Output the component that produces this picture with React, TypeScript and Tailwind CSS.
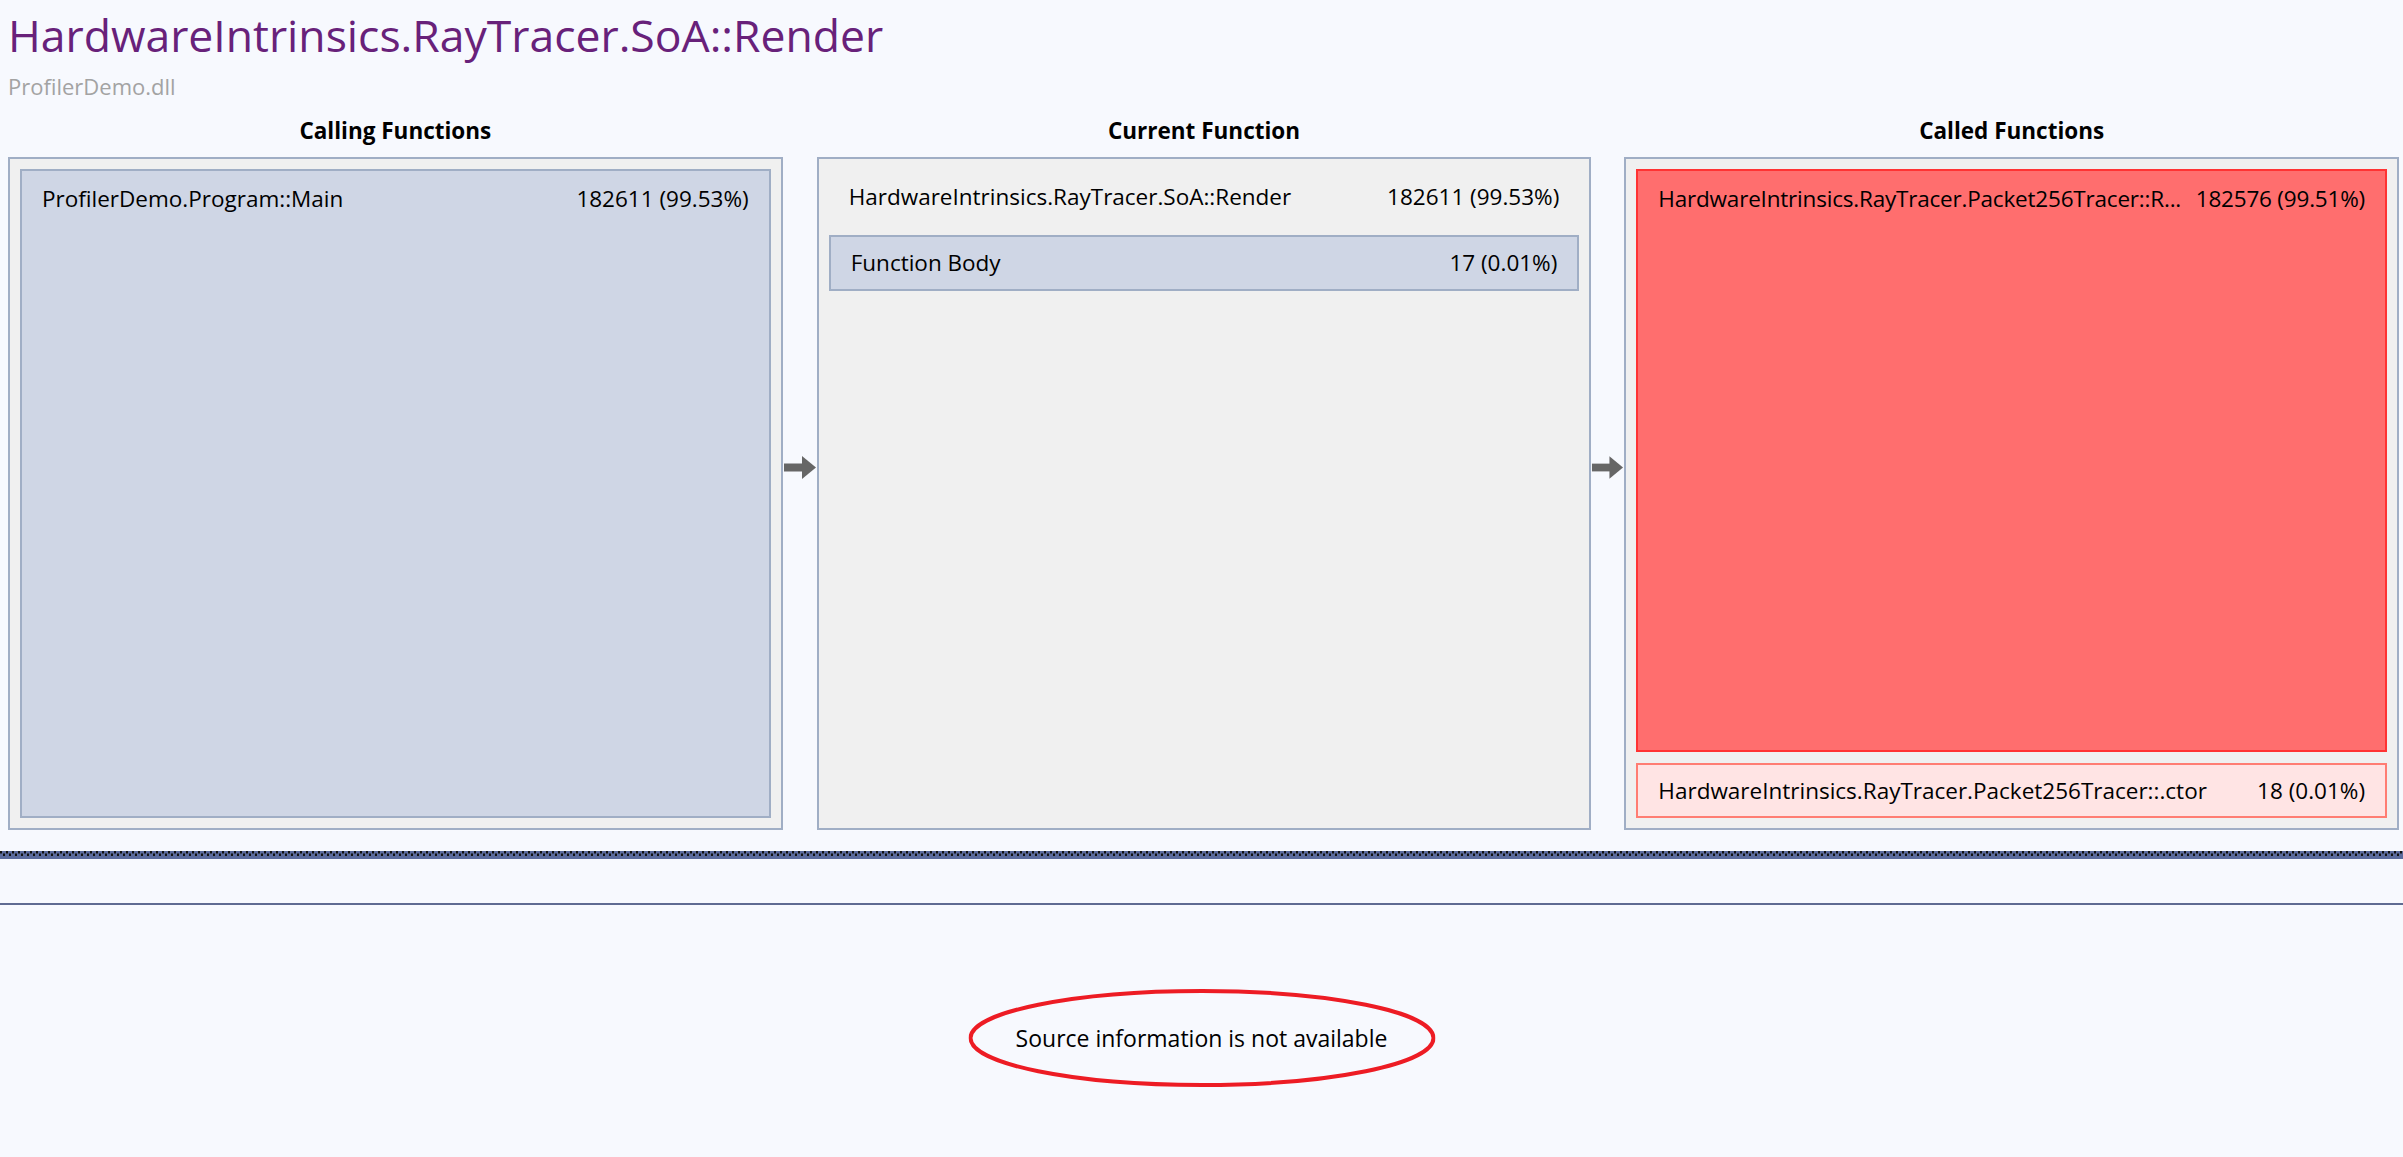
import React from 'react';

interface Row {
  name: string;
  value: string;
}

const FONT = "font-['Open_Sans','Noto_Sans',sans-serif]";

const ArrowRight: React.FC = () => (
  <svg width="34" height="24" viewBox="0 0 34 24" className="block">
    <rect x="1" y="7.5" width="19" height="8" fill="#666666" />
    <polygon points="19,0 33,11.5 19,23" fill="#666666" />
  </svg>
);

const RowLine: React.FC<{ row: Row; className?: string }> = ({ row, className = '' }) => (
  <div className={`flex items-center justify-between gap-[4px] px-[20px] text-[22.5px] text-black whitespace-nowrap ${className}`}>
    <span className="min-w-0">{row.name}</span>
    <span className="shrink-0">{row.value}</span>
  </div>
);

const Column: React.FC<{ title: string; children: React.ReactNode }> = ({ title, children }) => (
  <div className="flex-1 flex flex-col min-w-0">
    <div className="h-[52px] flex items-center justify-center text-[22.5px] font-bold text-black">{title}</div>
    <div className="flex-1 flex flex-col border-2 border-[#a0aec5] bg-[#f0f0f0] p-[10px]">{children}</div>
  </div>
);

const Splitter: React.FC = () => (
  <svg width="100%" height="8" className="block">
    <defs>
      <pattern id="dots" width="6" height="8" patternUnits="userSpaceOnUse">
        <rect x="0" y="0" width="6" height="8" fill="#5a6a9c" />
        <rect x="0" y="0" width="2" height="2.5" fill="#111111" />
        <rect x="3" y="2.5" width="2" height="2.5" fill="#111111" />
      </pattern>
    </defs>
    <rect x="0" y="0" width="100%" height="8" fill="url(#dots)" />
  </svg>
);

export default function App() {
  return (
    <div className={`w-full h-[1157px] overflow-hidden bg-[#f7f9fe] flex flex-col ${FONT}`}>
      <div className="pl-[8px]">
        <div className="pt-[7px] leading-[56px] text-[44.5px] text-[#68217a] whitespace-nowrap">
          HardwareIntrinsics.RayTracer.SoA::Render
        </div>
        <div className="mt-[10px] leading-[26px] text-[22px] text-[#a3a3a3]">ProfilerDemo.dll</div>
      </div>

      <div className="mt-[6px] h-[725px] flex pl-[8px] pr-[4px]">
        <Column title="Calling Functions">
          <div className="flex-1 border-2 border-[#a0aec5] bg-[#cfd6e5]">
            <RowLine className="h-[56px]" row={{ name: 'ProfilerDemo.Program::Main', value: '182611 (99.53%)' }} />
          </div>
        </Column>

        <div className="w-[34px] flex items-center justify-center">
          <ArrowRight />
        </div>

        <Column title="Current Function">
          <RowLine className="h-[56px]" row={{ name: 'HardwareIntrinsics.RayTracer.SoA::Render', value: '182611 (99.53%)' }} />
          <div className="mt-[10px] h-[56px] border-2 border-[#a0aec5] bg-[#cfd6e5] flex flex-col justify-center">
            <RowLine row={{ name: 'Function Body', value: '17 (0.01%)' }} />
          </div>
        </Column>

        <div className="w-[33px] flex items-center justify-center">
          <ArrowRight />
        </div>

        <Column title="Called Functions">
          <div className="flex-1 border-2 border-[#ff3333] bg-[#ff6e6e]">
            <RowLine
              className="h-[56px] tracking-[-0.2px]"
              row={{ name: 'HardwareIntrinsics.RayTracer.Packet256Tracer::R...', value: '182576 (99.51%)' }}
            />
          </div>
          <div className="mt-[11px] h-[55px] border-2 border-[#ff7d73] bg-[#ffe4e4] flex flex-col justify-center">
            <RowLine row={{ name: 'HardwareIntrinsics.RayTracer.Packet256Tracer::.ctor', value: '18 (0.01%)' }} />
          </div>
        </Column>
      </div>

      <div className="mt-[21px]">
        <Splitter />
      </div>
      <div className="mt-[44px] h-[2px] bg-[#5f6b92]" />

      <div className="flex-1 flex items-center justify-center pt-[14px]">
        <div className="relative">
          <span className="text-[23px] text-black whitespace-nowrap">Source information is not available</span>
          <svg
            width="467"
            height="98"
            viewBox="0 0 467 98"
            className="absolute left-1/2 top-1/2 -translate-x-1/2 -translate-y-1/2 pointer-events-none"
          >
            <ellipse cx="233.5" cy="49" rx="231.5" ry="47" fill="none" stroke="#ed1c24" strokeWidth="4" />
          </svg>
        </div>
      </div>
    </div>
  );
}
